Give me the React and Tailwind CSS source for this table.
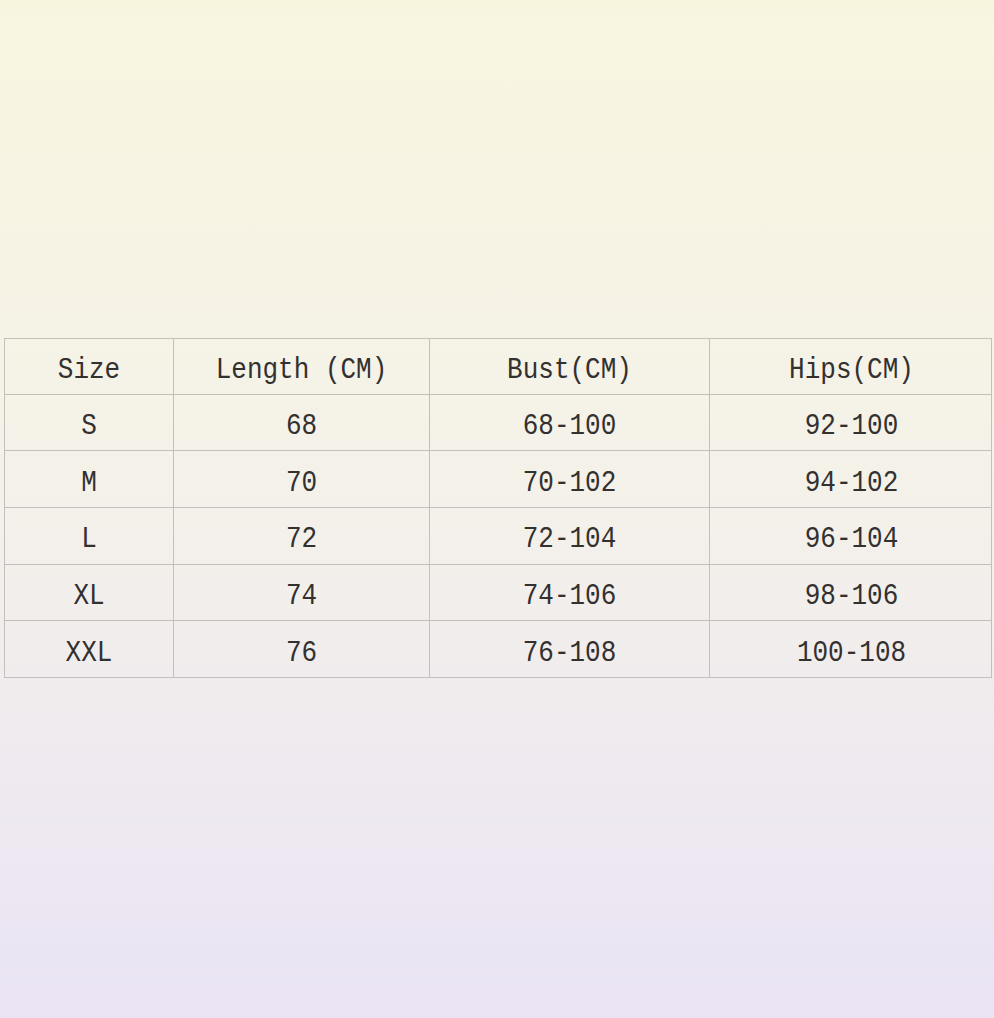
import React from 'react';

const header = ['Size', 'Length (CM)', 'Bust(CM)', 'Hips(CM)'];

const rows = [
  ['S', '68', '68-100', '92-100'],
  ['M', '70', '70-102', '94-102'],
  ['L', '72', '72-104', '96-104'],
  ['XL', '74', '74-106', '98-106'],
  ['XXL', '76', '76-108', '100-108'],
];

const Row = ({ cells, first }) => (
  <div className={`grid grid-cols-[168px_256px_280px_284px] h-[56.7px] border-b border-[#c2c0bd] ${first ? 'border-t' : ''}`}>
    {cells.map((c, i) => (
      <div
        key={i}
        className={`flex items-center justify-center pt-[8px] text-[26px] text-[#333030] ${i > 0 ? 'border-l border-[#c2c0bd]' : ''}`}
      >
        <span className="inline-block scale-y-[1.12]">{c}</span>
      </div>
    ))}
  </div>
);

export default function App() {
  return (
    <div className="w-[994px] h-[1018px] bg-gradient-to-b from-[#f8f5df] via-[#f4f1ea] to-[#e9e3f4] font-['Liberation_Mono','DejaVu_Sans_Mono',monospace] pt-[338px]">
      <div className="ml-[4px] w-[988px] border-l border-r border-[#c2c0bd]">
        <Row cells={header} first />
        {rows.map((r, i) => (
          <Row key={i} cells={r} />
        ))}
      </div>
    </div>
  );
}
